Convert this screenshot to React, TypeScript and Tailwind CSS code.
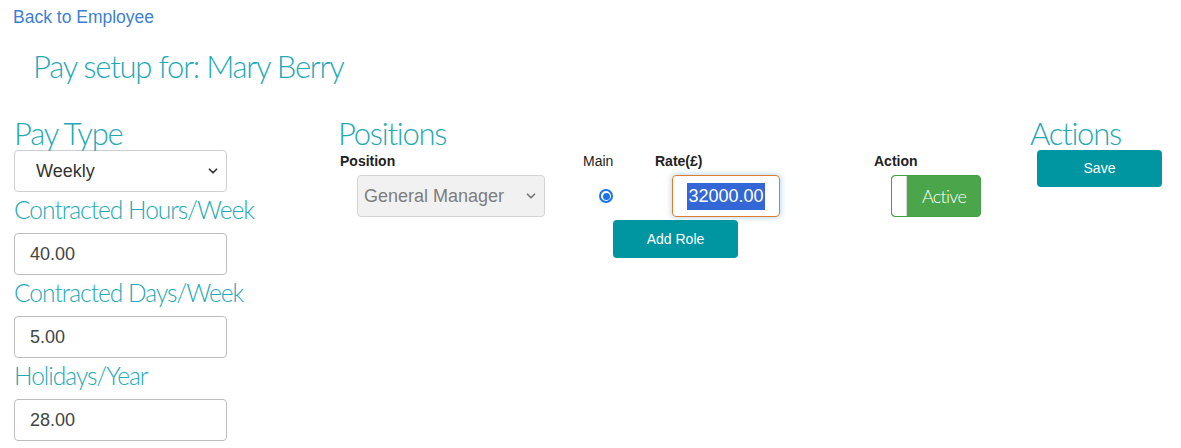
import { ChevronDown } from "lucide-react";

const heading = "font-['Lato',sans-serif] font-light text-[#23a9b5] tracking-[-0.04em]";
const body = "font-['Liberation_Sans',Arial,sans-serif]";

const Field = ({ label, value }: { label: string; value: string }) => (
  <div>
    <div className={`${heading} text-[24.5px] leading-[30px] mt-[3px]`}>{label}</div>
    <div className="mt-[8px] w-[213px] h-[42px] rounded-[4px] border border-[#bdbdbd] flex items-center pl-[15px] text-[18px] text-[#444]">
      {value}
    </div>
  </div>
);

export default function App() {
  return (
    <div className={`${body} bg-white w-[1181px] h-[448px] overflow-hidden relative`}>
      <a href="#" className="block pl-[13px] pt-[7px] text-[17.5px] leading-[20px] text-[#3d7fd3]">
        Back to Employee
      </a>
      <h1 className={`${heading} text-[31px] leading-[36px] pl-[33px] mt-[21px]`}>
        Pay setup for: Mary Berry
      </h1>

      <div className="flex mt-[34px]">
        {/* pay details */}
        <div className="w-[338px] pl-[14px] shrink-0">
          <div className={`${heading} text-[31px] leading-[31px]`}>Pay Type</div>
          <div className="mt-[1px] w-[213px] h-[42px] rounded-[4px] border border-[#cfcfcf] flex items-center justify-between pl-[21px] pr-[6px] text-[18px] text-[#333]">
            <span>Weekly</span>
            <ChevronDown className="w-[14px] h-[14px] text-[#333]" strokeWidth={3} />
          </div>
          <Field label="Contracted Hours/Week" value="40.00" />
          <Field label="Contracted Days/Week" value="5.00" />
          <Field label="Holidays/Year" value="28.00" />
        </div>

        {/* positions */}
        <div className="w-[692px] shrink-0">
          <div className={`${heading} text-[31px] leading-[31px]`}>Positions</div>
          <div className="flex text-[14px] leading-[20px] text-[#222] mt-[2px]">
            <div className="w-[245px] pl-[2px] font-bold">Position</div>
            <div className="w-[72px]">Main</div>
            <div className="w-[219px] font-bold">Rate(£)</div>
            <div className="font-bold">Action</div>
          </div>
          <div className="flex items-center mt-[4px]">
            <div className="w-[243px] pl-[19px]">
              <div className="w-[188px] h-[42px] rounded-[4px] border border-[#d4d4d4] bg-[#f1f1f1] flex items-center justify-between pl-[6px] pr-[6px] text-[18px] text-[#7d7d7d]">
                <span>General Manager</span>
                <ChevronDown className="w-[14px] h-[14px] text-[#777]" strokeWidth={3} />
              </div>
            </div>
            <div className="w-[91px] pl-[18px]">
              <div className="w-[14px] h-[14px] rounded-full border-2 border-[#1a73e8] flex items-center justify-center">
                <div className="w-[7px] h-[7px] rounded-full bg-[#1a73e8]" />
              </div>
            </div>
            <div className="w-[219px]">
              <div className="w-[108px] h-[42px] rounded-[4px] border border-[#e07b2c] shadow-[0_0_6px_rgba(102,175,233,0.6)] flex items-center justify-center text-[18px]">
                <span className="bg-[#3367d6] text-white px-[1px]">32000.00</span>
              </div>
            </div>
            <div className="w-[90px] h-[42px] rounded-[4px] bg-[#4ba64b] border border-[#44a044] flex items-center overflow-hidden">
              <div className="w-[15px] h-full bg-white rounded-l-[4px] border-r border-[#d8d8d8]" />
              <span className={`${heading} text-white text-[18px] ml-[15px]`}>Active</span>
            </div>
          </div>
          <div className="pl-[275px] mt-[3px]">
            <button className="w-[125px] h-[38px] rounded-[4px] bg-[#0096a1] text-white text-[14px]">
              Add Role
            </button>
          </div>
        </div>

        {/* actions */}
        <div className="flex-1">
          <div className={`${heading} text-[31px] leading-[31px]`}>Actions</div>
          <button className="ml-[7px] mt-[1px] w-[125px] h-[37px] rounded-[4px] bg-[#0096a1] text-white text-[14px]">
            Save
          </button>
        </div>
      </div>
    </div>
  );
}
